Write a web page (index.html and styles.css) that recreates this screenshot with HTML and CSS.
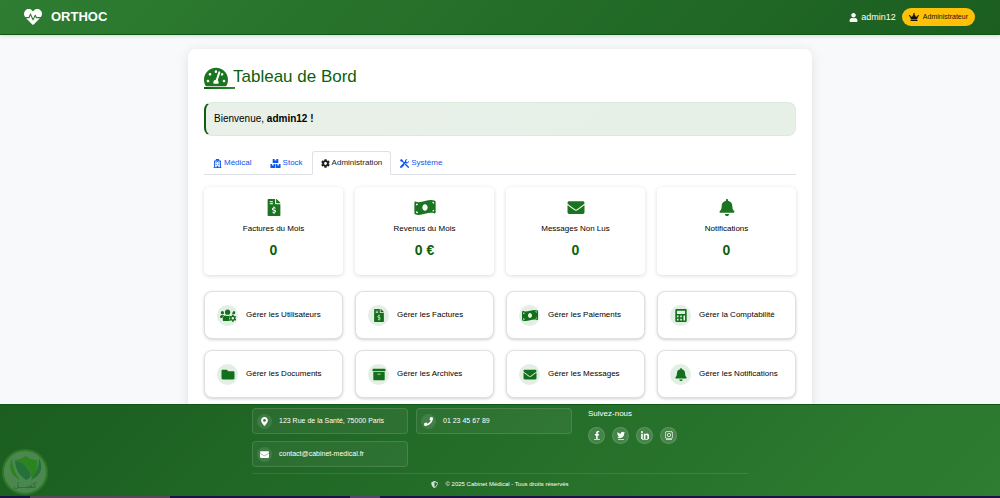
FILE: index.html
```html
<!DOCTYPE html>
<html lang="fr">
<head>
<meta charset="utf-8">
<meta name="viewport" content="width=device-width, initial-scale=1">
<title>ORTHOC - Tableau de Bord</title>
<link rel="stylesheet" href="styles.css">
</head>
<body>
<svg class="sprite" aria-hidden="true">
  <symbol id="heartbeat" viewBox="0 0 512 512"><path d="M320.2 243.8l-49.7 99.4c-6 12.1-23.4 11.7-28.9-.6l-56.9-126.3-30 71.7H60.6l182.5 186.5c7.1 7.3 18.6 7.3 25.7 0L451.4 288H342.3l-22.1-44.2zM473.7 73.9l-2.4-2.5c-51.5-52.6-135.8-52.6-187.4 0L256 100l-27.9-28.5c-51.5-52.7-135.9-52.7-187.4 0l-2.4 2.4C-10.4 123.7-12.5 203 31 256h102.4l35.9-86.2c5.4-12.9 23.6-13.2 29.4-.4l58.2 129.3 49-97.9c5.9-11.8 22.7-11.8 28.6 0l27.6 55.2H481c43.5-53 41.4-132.3-7.3-182.1z"/></symbol>
  <symbol id="user" viewBox="0 0 448 512"><path d="M224 256c70.7 0 128-57.3 128-128S294.7 0 224 0 96 57.3 96 128s57.3 128 128 128zm89.6 32h-16.7c-22.2 10.2-46.9 16-72.9 16s-50.6-5.8-72.9-16h-16.7C60.2 288 0 348.2 0 422.4V464c0 26.5 21.5 48 48 48h352c26.5 0 48-21.5 48-48v-41.6c0-74.2-60.2-134.4-134.4-134.4z"/></symbol>
  <symbol id="crown" viewBox="0 0 640 512"><path d="M528 448H112c-8.8 0-16 7.2-16 16v32c0 8.8 7.2 16 16 16h416c8.8 0 16-7.2 16-16v-32c0-8.8-7.2-16-16-16zm64-320c-26.5 0-48 21.5-48 48 0 7.1 1.6 13.7 4.4 19.8L476 239.2c-15.4 9.2-35.3 4-44.2-11.6L350.3 85C361 76.2 368 63 368 48c0-26.5-21.5-48-48-48s-48 21.5-48 48c0 15 7 28.2 17.7 37l-81.5 142.6c-8.9 15.6-28.9 20.8-44.2 11.6l-72.3-43.4c2.7-6 4.4-12.7 4.4-19.8 0-26.5-21.5-48-48-48S0 149.5 0 176s21.5 48 48 48c2.6 0 5.2-.4 7.7-.8L128 416h384l72.3-192.8c2.5.4 5.1.8 7.7.8 26.5 0 48-21.5 48-48s-21.5-48-48-48z"/></symbol>
  <symbol id="gauge" viewBox="0 0 576 512"><path d="M288 32C128.94 32 0 160.94 0 320c0 52.8 14.25 102.26 39.06 144.8 5.61 9.62 16.3 15.2 27.44 15.2h443c11.14 0 21.83-5.58 27.44-15.2C561.75 422.26 576 372.8 576 320c0-159.06-128.94-288-288-288zm0 64c14.71 0 26.58 10.13 30.32 23.65-1.11 2.26-2.64 4.23-3.45 6.67l-9.22 27.67c-5.13 3.49-10.97 6.01-17.64 6.01-17.67 0-32-14.33-32-32S270.33 96 288 96zM96 384c-17.67 0-32-14.33-32-32s14.33-32 32-32 32 14.33 32 32-14.33 32-32 32zm48-160c-17.67 0-32-14.33-32-32s14.33-32 32-32 32 14.33 32 32-14.33 32-32 32zm246.77-72.41l-61.33 184C343.13 347.33 352 364.54 352 384c0 11.72-3.38 22.55-8.88 32H232.88c-5.5-9.45-8.88-20.28-8.88-32 0-33.94 26.5-61.43 59.9-63.59l61.34-184.01c4.17-12.56 17.73-19.45 30.36-15.17 12.57 4.19 19.35 17.79 15.17 30.36zm14.66 57.2l15.52-46.55c3.47-1.29 7.13-2.23 11.05-2.23 17.67 0 32 14.33 32 32s-14.33 32-32 32c-11.38-.01-20.89-6.28-26.57-15.22zM480 384c-17.67 0-32-14.33-32-32s14.33-32 32-32 32 14.33 32 32-14.33 32-32 32z"/></symbol>
  <symbol id="hospital" viewBox="0 0 448 512"><path fill-rule="evenodd" d="M448 470v42H0v-42h32V104q0-16 18-16h78V24q0-24 24-24h144q24 0 24 24v64h78q18 0 18 16v366zM92 146v324h84v-90h96v90h84V146H264V56h-80v90z"/><path d="M204 60h40v34h34v40h-34v34h-40v-34h-34V94h34zM126 196h60v50h-60zM262 196h60v50h-60zM126 292h60v50h-60zM262 292h60v50h-60z"/></symbol>
  <symbol id="boxes" viewBox="0 0 576 512"><path d="M144 0h96v96l48-28 48 28V0h96q16 0 16 16v192q0 16-16 16H144q-16 0-16-16V16q0-16 16-16zM16 288h80v96l40-26 40 26v-96h80q16 0 16 16v192q0 16-16 16H16q-16 0-16-16V304q0-16 16-16zM320 288h80v96l40-26 40 26v-96h80q16 0 16 16v192q0 16-16 16H320q-16 0-16-16V304q0-16 16-16z"/></symbol>
  <symbol id="cog" viewBox="0 0 512 512"><path d="M487.4 315.7l-42.6-24.6c4.3-23.2 4.3-47 0-70.2l42.6-24.6c4.9-2.8 7.1-8.6 5.5-14-11.1-35.6-30-67.8-54.7-94.6-3.8-4.1-10-5.1-14.8-2.3L380.8 110c-17.9-15.4-38.5-27.3-60.8-35.1V25.8c0-5.6-3.9-10.5-9.4-11.7-36.7-8.2-74.3-7.8-109.2 0-5.5 1.2-9.4 6.1-9.4 11.7V75c-22.2 7.9-42.8 19.8-60.8 35.1L88.7 85.5c-4.9-2.8-11-1.9-14.8 2.3-24.7 26.7-43.6 58.9-54.7 94.6-1.7 5.4.6 11.2 5.5 14L67.3 221c-4.3 23.2-4.3 47 0 70.2l-42.6 24.6c-4.9 2.8-7.1 8.6-5.5 14 11.1 35.6 30 67.8 54.7 94.6 3.8 4.1 10 5.1 14.8 2.3l42.6-24.6c17.9 15.4 38.5 27.3 60.8 35.1v49.2c0 5.6 3.9 10.5 9.4 11.7 36.7 8.2 74.3 7.8 109.2 0 5.5-1.2 9.4-6.1 9.4-11.7v-49.2c22.2-7.9 42.8-19.8 60.8-35.1l42.6 24.6c4.9 2.8 11 1.9 14.8-2.3 24.7-26.7 43.6-58.9 54.7-94.6 1.5-5.5-.7-11.3-5.6-14.1zM256 336c-44.1 0-80-35.9-80-80s35.9-80 80-80 80 35.9 80 80-35.9 80-80 80z"/></symbol>
  <symbol id="tools" viewBox="0 0 512 512"><path d="M64 0L0 64l64 88h58l104 104 44-44-112-112V60zM300 266c-24 28-20 62 6 88l130 136c20 24 46 24 64 6s16-44-4-64L362 300c-18-18-40-30-62-34zM500 108l-74 74-68-12-12-68 74-74C350-8 270 50 286 142L18 410c-24 24-24 60 0 84s60 24 84 0l140-140c-2-50 34-92 82-108 110 18 210-50 176-138zM60 476a24 24 0 1 1 0-48 24 24 0 0 1 0 48z"/></symbol>
  <symbol id="invoice" viewBox="0 0 384 512"><path d="M377 105L279.1 7c-4.5-4.5-10.6-7-17-7H256v128h128v-6.1c0-6.3-2.5-12.4-7-16.9zm-153 31V0H24C10.7 0 0 10.7 0 24v464c0 13.3 10.7 24 24 24h336c13.3 0 24-10.7 24-24V160H248c-13.2 0-24-10.8-24-24zM64 72c0-4.42 3.58-8 8-8h80c4.42 0 8 3.58 8 8v16c0 4.42-3.58 8-8 8H72c-4.42 0-8-3.58-8-8V72zm0 80v-16c0-4.42 3.58-8 8-8h80c4.42 0 8 3.58 8 8v16c0 4.42-3.58 8-8 8H72c-4.42 0-8-3.58-8-8zm144 263.88V440c0 4.42-3.58 8-8 8h-16c-4.42 0-8-3.58-8-8v-24.29c-11.29-.58-22.27-4.52-31.37-11.35-3.9-2.93-4.1-8.77-.57-12.14l11.75-11.21c2.77-2.64 6.89-2.76 10.13-.73 3.87 2.42 8.26 3.72 12.82 3.72h28.11c6.5 0 11.8-5.92 11.8-13.19 0-5.95-3.61-11.19-8.77-12.73l-45-13.5c-18.59-5.58-31.58-23.42-31.58-43.39 0-24.52 19.05-44.44 42.67-45.07V232c0-4.42 3.58-8 8-8h16c4.42 0 8 3.58 8 8v24.29c11.29.58 22.27 4.51 31.37 11.35 3.9 2.93 4.1 8.77.57 12.14l-11.75 11.21c-2.77 2.64-6.89 2.76-10.13.73-3.87-2.43-8.26-3.72-12.82-3.72h-28.11c-6.5 0-11.8 5.92-11.8 13.19 0 5.95 3.61 11.19 8.77 12.73l45 13.5c18.59 5.58 31.58 23.42 31.58 43.39 0 24.53-19.05 44.44-42.67 45.07z"/></symbol>
  <symbol id="money" viewBox="0 0 640 512"><path d="M621.16 54.46C582.37 38.19 543.55 32 504.75 32c-123.17-.01-246.33 62.34-369.5 62.34-30.89 0-61.76-3.92-92.65-13.72-3.47-1.1-6.95-1.62-10.35-1.62C15.04 79 0 92.32 0 110.81v317.26c0 12.63 7.23 24.6 18.84 29.46C57.63 473.81 96.45 480 135.25 480c123.17 0 246.34-62.35 369.51-62.35 30.89 0 61.76 3.92 92.65 13.72 3.47 1.1 6.95 1.62 10.35 1.62 17.21 0 32.25-13.32 32.25-31.81V83.93c-.01-12.64-7.24-24.6-18.85-29.47zM48 132.22c20.12 5.04 41.12 7.57 62.72 8.93C104.84 170.54 79 192.69 48 192.69v-60.47zm0 285v-47.78c34.37 0 62.18 27.27 63.71 61.4-22.53-1.81-43.59-6.31-63.71-13.62zM320 352c-44.19 0-80-42.99-80-96 0-53.02 35.82-96 80-96s80 42.98 80 96c0 53.03-35.83 96-80 96zm272 27.78c-17.52-4.39-35.71-6.85-54.32-8.44 5.87-26.08 27.5-45.88 54.32-49.28v57.72zm0-236.11c-30.89-3.91-54.86-29.7-55.81-61.55 19.54 2.17 38.09 6.23 55.81 12.66v48.89z"/></symbol>
  <symbol id="envelope" viewBox="0 0 512 512"><path d="M502.3 190.8c3.9-3.1 9.7-.2 9.7 4.7V400c0 26.5-21.5 48-48 48H48c-26.5 0-48-21.5-48-48V195.6c0-5 5.7-7.8 9.7-4.7 22.4 17.4 52.1 39.5 154.1 113.6 21.1 15.4 56.7 47.8 92.2 47.6 35.7.3 72-32.8 92.3-47.6 102-74.1 131.6-96.3 154-113.7zM256 320c23.2.4 56.6-29.2 73.4-41.4 132.7-96.3 142.8-104.7 173.4-128.7 5.8-4.5 9.2-11.5 9.2-18.9v-19c0-26.5-21.5-48-48-48H48c-26.5 0-48 21.5-48 48v19c0 7.4 3.4 14.3 9.2 18.9 30.6 23.9 40.7 32.4 173.4 128.7 16.8 12.2 50.2 41.8 73.4 41.4z"/></symbol>
  <symbol id="bell" viewBox="0 0 448 512"><path d="M224 512c35.32 0 63.97-28.65 63.97-64H160.03c0 35.35 28.65 64 63.97 64zm215.39-149.71c-19.32-20.76-55.47-51.99-55.47-154.29 0-77.7-54.48-139.9-127.94-155.16V32c0-17.67-14.32-32-31.98-32s-31.98 14.33-31.98 32v20.84C118.56 68.1 64.08 130.3 64.08 208c0 102.3-36.15 133.53-55.47 154.29-6 6.45-8.66 14.16-8.61 21.71.11 16.4 12.98 32 32.1 32h383.8c19.12 0 32-15.6 32.1-32 .05-7.55-2.61-15.27-8.61-21.71z"/></symbol>
  <symbol id="users-cog" viewBox="0 0 640 512"><circle cx="96" cy="144" r="64"/><circle cx="304" cy="124" r="104"/><path d="M544 80a64 64 0 1 1-60 86zM64 240h72l28 20c-36 18-62 52-68 92H32q-32 0-32-32 2-70 64-80zM224 252q80 42 160 0l6 84-22 20 20 112 34 12H160q-48 0-48-48v-60q0-104 112-120z"/><path fill-rule="evenodd" d="M482 228h60l8 42 26 15 41-14 29 50-32 28v34l32 28-29 50-41-14-26 15-8 42h-60l-8-42-26-15-41 14-29-50 32-28v-34l-32-28 29-50 41 14 26-15zm30 88a50 50 0 1 0 0 100 50 50 0 0 0 0-100z"/></symbol>
  <symbol id="calculator" viewBox="0 0 448 512"><path fill-rule="evenodd" d="M48 0h352q48 0 48 48v416q0 48-48 48H48q-48 0-48-48V48Q0 0 48 0zM64 64v128h320V64zM64 256v64h64v-64zm128 0v64h64v-64zm128 0v192h64V256zM64 384v64h64v-64zm128 0v64h64v-64z"/></symbol>
  <symbol id="folder" viewBox="0 0 512 512"><path d="M464 128H272l-64-64H48C21.49 64 0 85.49 0 112v288c0 26.51 21.49 48 48 48h416c26.51 0 48-21.49 48-48V176c0-26.51-21.49-48-48-48z"/></symbol>
  <symbol id="archive" viewBox="0 0 512 512"><path d="M32 448c0 17.7 14.3 32 32 32h384c17.7 0 32-14.3 32-32V160H32v288zm160-212c0-6.6 5.4-12 12-12h104c6.6 0 12 5.4 12 12v8c0 6.6-5.4 12-12 12H204c-6.6 0-12-5.4-12-12v-8zM480 32H32C14.3 32 0 46.3 0 64v48c0 8.8 7.2 16 16 16h480c8.8 0 16-7.2 16-16V64c0-17.7-14.3-32-32-32z"/></symbol>
  <symbol id="marker" viewBox="0 0 384 512"><path d="M172.268 501.67C26.97 291.031 0 269.413 0 192 0 85.961 85.961 0 192 0s192 85.961 192 192c0 77.413-26.97 99.031-172.268 309.67-9.535 13.774-29.93 13.773-39.464 0zM192 272c44.183 0 80-35.817 80-80s-35.817-80-80-80-80 35.817-80 80 35.817 80 80 80z"/></symbol>
  <symbol id="phone" viewBox="0 0 512 512"><path d="M493.4 24.6l-104-24c-11.3-2.6-22.9 3.3-27.5 13.9l-48 112c-4.2 9.8-1.4 21.3 6.9 28l60.6 49.6c-36 76.7-98.9 140.5-177.2 177.2l-49.6-60.6c-6.8-8.3-18.2-11.1-28-6.9l-112 48C3.9 366.5-2 378.1.6 389.4l24 104C27.1 504.2 36.7 512 48 512c256.1 0 464-207.5 464-464 0-11.2-7.7-20.9-18.6-23.4z"/></symbol>
  <symbol id="shield" viewBox="0 0 512 512"><path d="M466.5 83.7l-192-80a48.15 48.15 0 0 0-36.9 0l-192 80C27.7 91.1 16 108.6 16 128c0 198.5 114.5 335.7 221.5 380.3 11.8 4.9 25.1 4.9 36.9 0C360.1 472.6 496 349.3 496 128c0-19.4-11.7-36.9-29.5-44.3zM256.1 446.3l-.1-381 175.9 73.3c-3.3 151.4-82.1 261.1-175.8 307.7z"/></symbol>
  <symbol id="facebook" viewBox="0 0 320 512"><path d="M279.14 288l14.22-92.66h-88.91v-60.13c0-25.35 12.42-50.06 52.24-50.06h40.42V6.26S260.43 0 225.36 0c-73.22 0-121.08 44.38-121.08 124.72v70.62H22.89V288h81.39v224h100.17V288z"/></symbol>
  <symbol id="twitter" viewBox="0 0 512 512"><path d="M459.37 151.716c.325 4.548.325 9.097.325 13.645 0 138.72-105.583 298.558-298.558 298.558-59.452 0-114.68-17.219-161.137-47.106 8.447.974 16.568 1.299 25.34 1.299 49.055 0 94.213-16.568 130.274-44.832-46.132-.975-84.792-31.188-98.112-72.772 6.498.974 12.995 1.624 19.818 1.624 9.421 0 18.843-1.3 27.614-3.573-48.081-9.747-84.143-51.98-84.143-102.985v-1.299c13.969 7.797 30.214 12.67 47.431 13.319-28.264-18.843-46.781-51.005-46.781-87.391 0-19.492 5.197-37.36 14.294-52.954 51.655 63.675 129.3 105.258 216.365 109.807-1.624-7.797-2.599-15.918-2.599-24.04 0-57.828 46.782-104.934 104.934-104.934 30.213 0 57.502 12.67 76.67 33.137 23.715-4.548 46.456-13.32 66.599-25.34-7.798 24.366-24.366 44.833-46.132 57.827 21.117-2.273 41.584-8.122 60.426-16.243-14.292 20.791-32.161 39.308-52.628 54.253z"/></symbol>
  <symbol id="linkedin" viewBox="0 0 448 448"><path d="M100.28 448H7.4V148.9h92.88zM53.79 108.1C24.09 108.1 0 83.5 0 53.8a53.79 53.79 0 0 1 107.58 0c0 29.7-24.1 54.3-53.79 54.3zM447.9 448h-92.68V302.4c0-34.7-.7-79.2-48.29-79.2-48.29 0-55.69 37.7-55.69 76.7V448h-92.78V148.9h89.08v40.8h1.3c12.4-23.5 42.69-48.3 87.88-48.3 94 0 111.28 61.9 111.28 142.3V448z"/></symbol>
  <symbol id="instagram" viewBox="0 0 448 448"><g fill="none" stroke="currentColor" stroke-width="42"><rect x="21" y="21" width="406" height="406" rx="110"/><circle cx="224" cy="224" r="94"/></g><circle cx="344" cy="104" r="27"/></symbol>
</svg>

<header class="topbar">
  <div class="brand"><svg class="icon icon-brand"><use href="#heartbeat"/></svg><span>ORTHOC</span></div>
  <div class="account">
    <span class="account-name"><svg class="icon icon-sm"><use href="#user"/></svg>admin12</span>
    <span class="role"><svg class="icon icon-crown"><use href="#crown"/></svg>Administrateur</span>
  </div>
</header>

<main class="content">
  <section class="panel">
    <h1 class="title"><svg class="icon icon-title"><use href="#gauge"/></svg><span>Tableau de Bord</span></h1>
    <p class="welcome">Bienvenue, <strong>admin12 !</strong></p>

    <nav class="tabs" role="tablist">
      <button class="tab" role="tab" type="button"><svg class="icon icon-sm"><use href="#hospital"/></svg>Médical</button>
      <button class="tab" role="tab" type="button"><svg class="icon icon-tab"><use href="#boxes"/></svg>Stock</button>
      <button class="tab tab-active" role="tab" type="button" aria-selected="true"><svg class="icon icon-sm"><use href="#cog"/></svg>Administration</button>
      <button class="tab" role="tab" type="button"><svg class="icon icon-sm"><use href="#tools"/></svg>Système</button>
    </nav>

    <div class="grid stats">
      <article class="stat"><svg class="icon icon-stat"><use href="#invoice"/></svg><h2 class="stat-label">Factures du Mois</h2><p class="stat-value">0</p></article>
      <article class="stat"><svg class="icon icon-stat"><use href="#money"/></svg><h2 class="stat-label">Revenus du Mois</h2><p class="stat-value">0 €</p></article>
      <article class="stat"><svg class="icon icon-stat"><use href="#envelope"/></svg><h2 class="stat-label">Messages Non Lus</h2><p class="stat-value">0</p></article>
      <article class="stat"><svg class="icon icon-stat"><use href="#bell"/></svg><h2 class="stat-label">Notifications</h2><p class="stat-value">0</p></article>
    </div>

    <div class="grid">
      <a class="action" href="#"><span class="bubble"><svg class="icon icon-action"><use href="#users-cog"/></svg></span>Gérer les Utilisateurs</a>
      <a class="action" href="#"><span class="bubble"><svg class="icon icon-action"><use href="#invoice"/></svg></span>Gérer les Factures</a>
      <a class="action" href="#"><span class="bubble"><svg class="icon icon-action"><use href="#money"/></svg></span>Gérer les Paiements</a>
      <a class="action" href="#"><span class="bubble"><svg class="icon icon-action"><use href="#calculator"/></svg></span>Gérer la Comptabilité</a>
      <a class="action" href="#"><span class="bubble"><svg class="icon icon-action"><use href="#folder"/></svg></span>Gérer les Documents</a>
      <a class="action" href="#"><span class="bubble"><svg class="icon icon-action"><use href="#archive"/></svg></span>Gérer les Archives</a>
      <a class="action" href="#"><span class="bubble"><svg class="icon icon-action"><use href="#envelope"/></svg></span>Gérer les Messages</a>
      <a class="action" href="#"><span class="bubble"><svg class="icon icon-action"><use href="#bell"/></svg></span>Gérer les Notifications</a>
    </div>
  </section>
</main>

<footer class="footer">
  <div class="footer-inner">
    <div class="footer-cols">
      <address class="contacts">
        <div class="contact"><span class="dot"><svg class="icon icon-sm"><use href="#marker"/></svg></span>123 Rue de la Santé, 75000 Paris</div>
        <div class="contact"><span class="dot"><svg class="icon icon-sm"><use href="#phone"/></svg></span>01 23 45 67 89</div>
        <div class="contact"><span class="dot"><svg class="icon icon-sm"><use href="#envelope"/></svg></span>contact@cabinet-medical.fr</div>
      </address>
      <div class="social">
        <h2 class="social-title">Suivez-nous</h2>
        <div class="social-links">
          <a class="social-link" href="#" aria-label="Facebook"><svg class="icon icon-social"><use href="#facebook"/></svg></a>
          <a class="social-link" href="#" aria-label="Twitter"><svg class="icon icon-social"><use href="#twitter"/></svg></a>
          <a class="social-link" href="#" aria-label="LinkedIn"><svg class="icon icon-social"><use href="#linkedin"/></svg></a>
          <a class="social-link" href="#" aria-label="Instagram"><svg class="icon icon-social"><use href="#instagram"/></svg></a>
        </div>
      </div>
    </div>
    <p class="legal"><svg class="icon icon-legal"><use href="#shield"/></svg>© 2025 Cabinet Médical - Tous droits réservés</p>
  </div>
  <svg class="seal" viewBox="0 0 48 48" role="img" aria-label="كفيل">
    <circle cx="24" cy="24" r="22" fill="#4c8750" stroke="#2d7a25" stroke-width="2"/>
    <path fill="#2b8420" d="M15 12q5-1 10-4 5 4 11 4 1 12-5 19-2-14-16-19z"/>
    <path fill="#25713a" d="M14 12q0 13 11 20 3-1 5-4-3-12-16-16z"/>
    <path fill="#2b8420" d="M11 10Q5 25 19 32 11 22 11 10z"/>
    <path fill="#25713a" d="M38 10q7 15-8 22 8-10 8-22z"/>
    <text class="seal-text" x="24" y="40" text-anchor="middle">كفيـــل</text>
  </svg>
</footer>
<div class="strip"></div>
</body>
</html>
```
FILE: styles.css
```css
* { box-sizing: border-box; }

body {
  display: flex;
  flex-direction: column;
  height: 100vh;
  margin: 0;
  overflow: hidden;
  background: #f8f9fb;
  color: #000;
  font: 8px/12px "Liberation Sans", Arial, sans-serif;
}

h1, h2, p { margin: 0; font-weight: 400; }
a { color: inherit; text-decoration: none; }

.sprite { position: absolute; width: 0; height: 0; }
.icon { flex: none; fill: currentColor; }
.icon-brand { width: 18px; height: 18px; }
.icon-sm { width: 9px; height: 9px; }
.icon-tab { width: 11px; height: 9px; }
.icon-crown { width: 10px; height: 8px; }
.icon-title { width: 24px; height: 22px; }
.icon-stat { width: 22px; height: 17px; }
.icon-action { width: 16px; height: 13px; }
.icon-social { width: 8px; height: 8px; }
.icon-legal { width: 7px; height: 7px; opacity: .8; }

.topbar {
  position: relative;
  display: flex;
  flex: none;
  align-items: center;
  justify-content: space-between;
  height: 35px;
  padding: 0 25px 0 24px;
  border-bottom: 1px solid #0f5714;
  background: linear-gradient(135deg, #2e7d32, #1b5e20);
  box-shadow: 0 1px 4px rgba(0, 0, 0, .15);
  color: #fff;
}
.brand { display: flex; align-items: center; gap: 9px; font-size: 13px; font-weight: 700; }
.account { display: flex; align-items: center; gap: 6px; }
.account-name { display: flex; align-items: center; gap: 3px; font-size: 9px; }
.role {
  display: flex;
  align-items: center;
  gap: 4px;
  height: 18px;
  padding: 0 7px;
  border-radius: 9px;
  background: #ffc107;
  color: #111;
  font-size: 7px;
}

.content { flex: 1; min-height: 0; padding: 14px 16px 0; overflow: hidden; }
.panel {
  max-width: 624px;
  margin: 0 auto;
  padding: 16px 16px 32px;
  border-radius: 8px;
  background: #fff;
  box-shadow: 0 2px 12px rgba(0, 0, 0, .1);
}
.title {
  position: relative;
  display: flex;
  align-items: center;
  gap: 5px;
  height: 24px;
  margin-bottom: 13px;
  color: #0b5f0f;
  font-size: 17px;
  line-height: 22px;
}
.title .icon { color: #1b7420; }
.title::after {
  content: "";
  position: absolute;
  bottom: 0;
  left: 0;
  width: 31px;
  height: 2px;
  background: linear-gradient(90deg, #0b5f0f, #2e8b32);
}
.welcome {
  padding: 10px 8px;
  border: 1px solid #dce9dd;
  border-left: 2px solid #0b5f0f;
  border-radius: 8px;
  background: linear-gradient(135deg, #e9f0e9, #e6f0e7);
  font-size: 10px;
}

.tabs {
  display: flex;
  margin: 15px 0 12px;
  border-bottom: 1px solid #dee2e6;
}
.tab {
  display: flex;
  align-items: center;
  gap: 2px;
  height: 24px;
  margin-bottom: -1px;
  padding: 0 8px;
  border: 1px solid transparent;
  border-radius: 3px 3px 0 0;
  background: none;
  color: #0d55f0;
  font: inherit;
}
.tab-active { border-color: #dee2e6; border-bottom-color: #fff; background: #fff; color: #222; }

.grid { display: grid; grid-template-columns: repeat(4, minmax(0, 1fr)); gap: 11px 12px; }
.stats { margin-bottom: 16px; }
.stat {
  display: flex;
  flex-direction: column;
  align-items: center;
  padding: 12px 8px 16px;
  border-radius: 5px;
  background: #fff;
  box-shadow: 0 1px 4px rgba(0, 0, 0, .14);
}
.stat .icon { color: #1b7420; }
.stat-label { margin: 7px 0 6px; font-size: 8px; line-height: 12px; }
.stat-value { color: #0b5f0f; font-size: 14px; font-weight: 700; line-height: 18px; }

.action {
  display: flex;
  align-items: center;
  gap: 8px;
  height: 48px;
  padding: 0 12px;
  border: 1px solid #e0e0e0;
  border-radius: 8px;
  background: #fff;
  box-shadow: 0 1px 3px rgba(0, 0, 0, .18);
  white-space: nowrap;
}
.bubble {
  display: flex;
  flex: none;
  align-items: center;
  justify-content: center;
  width: 21px;
  height: 21px;
  border-radius: 50%;
  background: #e3efe4;
  color: #13701a;
}

.footer {
  position: relative;
  flex: none;
  padding: 3px 16px 6px;
  border-top: 1px solid #0f5714;
  background: linear-gradient(135deg, #1b5e20, #2e7d32);
  color: #fff;
}
.footer-inner { max-width: 496px; margin: 0 auto; }
.footer-cols { display: grid; grid-template-columns: 2fr 1fr; gap: 16px; }
.contacts {
  display: grid;
  grid-template-columns: 1fr 1fr;
  gap: 7px 8px;
  font-size: 7px;
  font-style: normal;
}
.contact {
  display: flex;
  align-items: center;
  gap: 7px;
  height: 26px;
  padding: 0 4px;
  border: 1px solid rgba(255, 255, 255, .12);
  border-radius: 4px;
  background: rgba(255, 255, 255, .05);
}
.dot {
  display: flex;
  align-items: center;
  justify-content: center;
  width: 15px;
  height: 15px;
  border-radius: 50%;
  background: rgba(255, 255, 255, .1);
}
.social-title { margin-bottom: 8px; font-size: 8px; line-height: 11px; }
.social-links { display: flex; gap: 7px; }
.social-link {
  display: flex;
  flex-direction: column;
  align-items: center;
  justify-content: center;
  width: 17px;
  height: 17px;
  border: 1px solid rgba(255, 255, 255, .12);
  border-radius: 50%;
  background: rgba(255, 255, 255, .15);
}
.social-link::after { content: ""; width: 6px; height: 1px; background: rgba(255, 255, 255, .7); }
.legal {
  display: flex;
  align-items: center;
  justify-content: center;
  gap: 7px;
  margin-top: 6px;
  padding-top: 4px;
  border-top: 1px solid rgba(255, 255, 255, .1);
  font-size: 6px;
}
.seal { position: absolute; bottom: 0; left: 1px; width: 48px; height: 48px; }
.seal-text { fill: #256a2e; font: 8px "DejaVu Sans", sans-serif; }

.strip {
  flex: none;
  height: 2px;
  background: linear-gradient(90deg, #1d1245 0 3%, #59465a 3% 17%, #1d1245 17% 35%, #54446f 35% 38%, #1d1245 38%);
}
```
